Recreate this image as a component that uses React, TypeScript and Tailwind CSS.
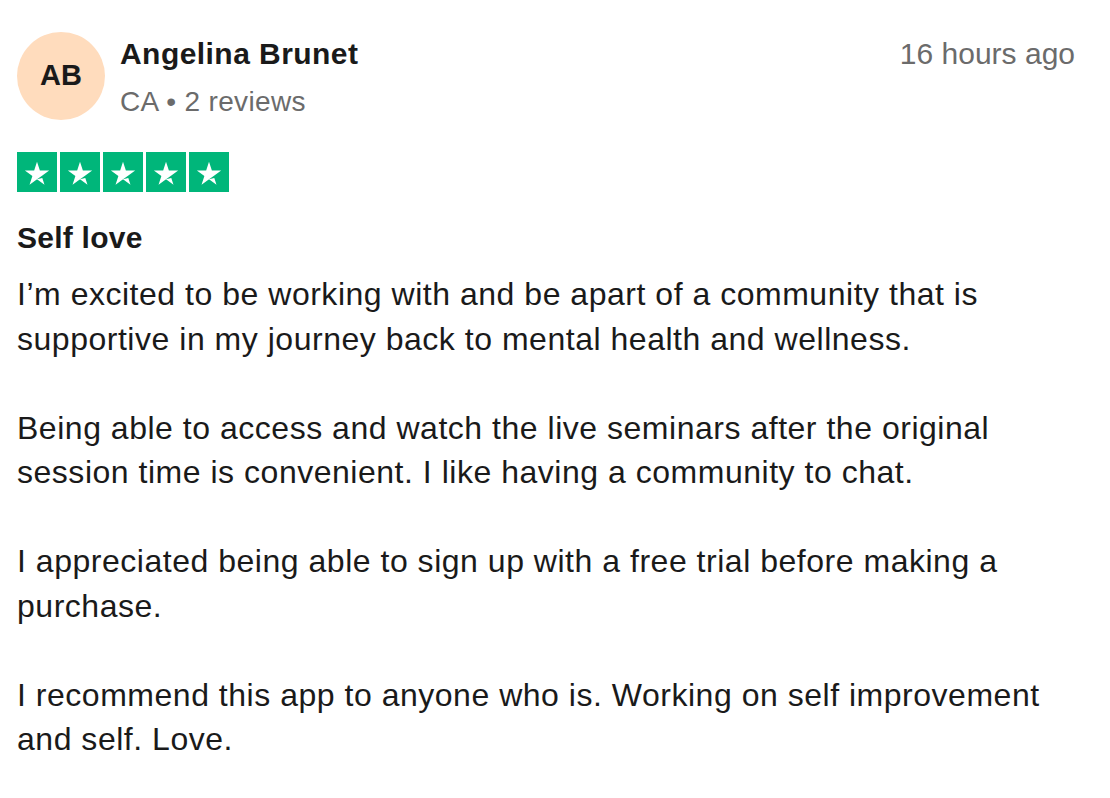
import React from "react";

const Star = () => (
  <div className="w-[40px] h-[40px] bg-[#00b67a] flex items-center justify-center">
    <svg viewBox="0 0 96 96" className="w-[40px] h-[40px]">
      <path
        fill="#ffffff"
        d="M48 65.6L60.7 62.4L66 78.7L48 65.6ZM77.2 44.6H54.9L48 23.6L41.2 44.6H18.9L36.9 57.6L30.1 78.6L48.1 65.6L59.2 57.6L77.2 44.6Z"
      />
    </svg>
  </div>
);

const paragraphs = [
  "I\u2019m excited to be working with and be apart of a community that is supportive in my journey back to mental health and wellness.",
  "Being able to access and watch the live seminars after the original session time is convenient. I like having a community to chat.",
  "I appreciated being able to sign up with a free trial before making a purchase.",
  "I recommend this app to anyone who is. Working on self improvement and self. Love.",
];

export default function App() {
  return (
    <div
      className="w-[1110px] min-h-[798px] bg-white pl-[17px] pr-[35px] pt-[32px] text-[#1a1a1a]"
      style={{ fontFamily: '"Liberation Sans", Arial, Helvetica, sans-serif' }}
    >
      <div className="flex items-start">
        <div className="w-[88px] h-[88px] rounded-full bg-[#ffdcbd] flex items-center justify-center shrink-0">
          <span className="text-[29px] font-bold text-[#1a1a1a]">AB</span>
        </div>
        <div className="ml-[15px] flex-1 pt-[4px]">
          <p className="text-[30px] leading-[36px] font-bold tracking-[0.45px]">Angelina Brunet</p>
          <p className="mt-[12px] text-[28px] leading-[36px] tracking-[0.35px] text-[#6b6b6b]">
            CA • 2 reviews
          </p>
        </div>
        <p className="pt-[4px] text-[30px] leading-[36px] text-[#6b6b6b]">16 hours ago</p>
      </div>

      <div className="mt-[32px] flex gap-[3px]">
        <Star />
        <Star />
        <Star />
        <Star />
        <Star />
      </div>

      <h2 className="mt-[28px] text-[30px] leading-[36px] font-bold tracking-[0.25px]">Self love</h2>

      <div className="mt-[16px] text-[32px] leading-[44.5px] tracking-[0.52px]">
        {paragraphs.map((text, i) => (
          <p key={i} className="mb-[44.5px]">
            {text}
          </p>
        ))}
      </div>
    </div>
  );
}
